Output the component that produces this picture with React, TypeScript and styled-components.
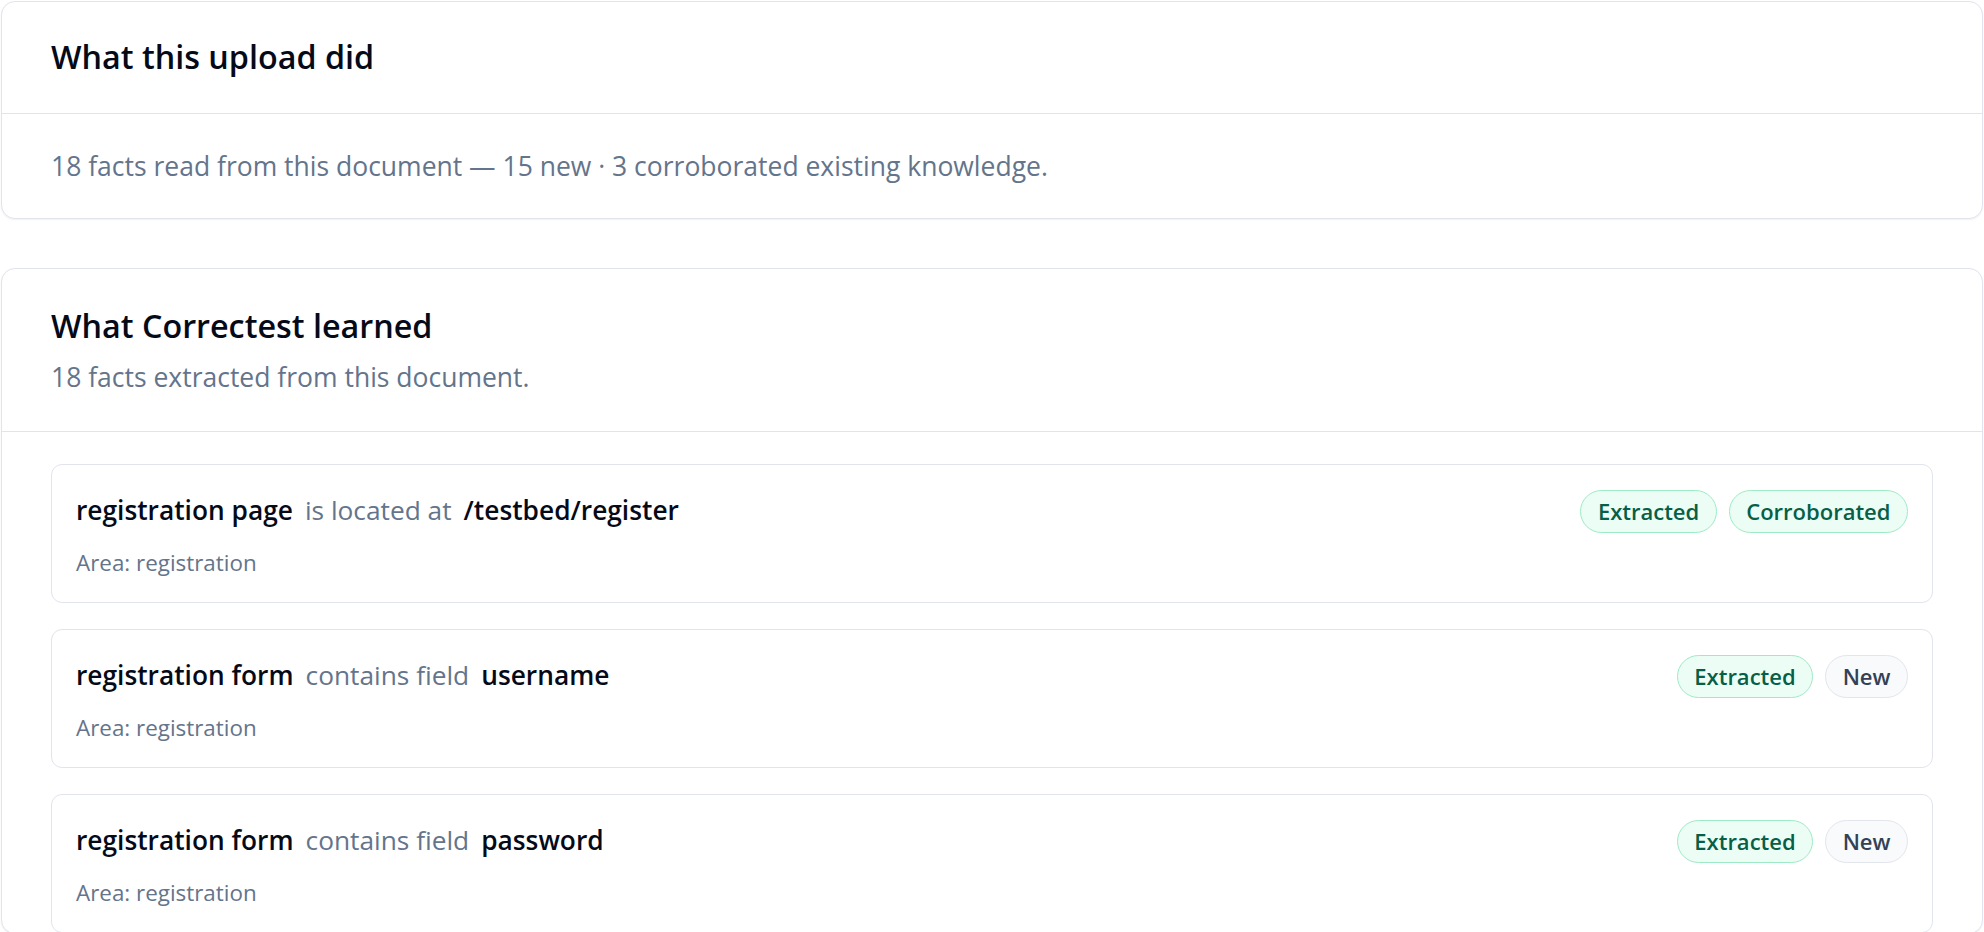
import React from "react";
import styled, { createGlobalStyle } from "styled-components";

const GlobalStyle = createGlobalStyle`
  html, body {
    margin: 0;
    padding: 0;
    background: #ffffff;
  }
  body {
    font-family: "Open Sans", "Noto Sans", "Liberation Sans", sans-serif;
    color: #0f172a;
    -webkit-font-smoothing: antialiased;
  }
  * { box-sizing: border-box; }
`;

const Page = styled.div`
  display: flex;
  flex-direction: column;
  gap: 49px;
  padding: 1px 1px 0 1px;
`;

const Card = styled.section`
  background: #ffffff;
  border: 1px solid #e1e4ed;
  border-radius: 14px;
  box-shadow: 0 1px 2px rgba(15, 23, 42, 0.06);
  overflow: hidden;
`;

const CardHeader = styled.header<{ $pt: number; $pb: number }>`
  padding: ${(p) => p.$pt}px 49px ${(p) => p.$pb}px 49px;
  border-bottom: 1px solid #e1e4ed;
  display: flex;
  flex-direction: column;
  gap: 14px;
`;

const Title = styled.h2`
  margin: 0;
  font-size: 32.3px;
  line-height: 40px;
  font-weight: 600;
  color: #050a18;
`;

const Muted = styled.p`
  margin: 0;
  font-size: 26.5px;
  line-height: 36px;
  font-weight: 400;
  color: #64748b;
`;

const CardBody = styled.div`
  padding: 34px 49px 34px 49px;
`;

const FactList = styled.div`
  padding: 32px 49px 0 49px;
  display: flex;
  flex-direction: column;
  gap: 26px;
`;

const Fact = styled.div`
  border: 1px solid #e1e4ed;
  border-radius: 11px;
  background: #ffffff;
  padding: 25px 24px 24px 24px;
  display: flex;
  flex-direction: column;
  gap: 15px;
`;

const FactRow = styled.div`
  display: flex;
  align-items: center;
  justify-content: space-between;
  height: 43px;
`;

const Statement = styled.div`
  display: flex;
  align-items: baseline;
  gap: 12px;
  font-size: 26.3px;
  line-height: 36px;
  margin-top: -3px;
`;

const Term = styled.span`
  font-weight: 600;
  color: #050a18;
`;

const Predicate = styled.span`
  font-weight: 400;
  color: #64748b;
`;

const Badges = styled.div`
  display: flex;
  align-items: center;
  gap: 12px;
`;

const Badge = styled.span<{ $tone: "green" | "gray" }>`
  display: inline-flex;
  align-items: center;
  height: 43px;
  padding: 0 16.5px;
  border-radius: 999px;
  font-size: 22px;
  line-height: 41px;
  font-weight: 600;
  border: 1.5px solid ${(p) => (p.$tone === "green" ? "#9eeac6" : "#e2e5eb")};
  background: ${(p) => (p.$tone === "green" ? "#ecfdf5" : "#f8fafc")};
  color: ${(p) => (p.$tone === "green" ? "#065f46" : "#334155")};
`;

const Area = styled.div`
  font-size: 22.4px;
  line-height: 30px;
  color: #64748b;
`;

type FactData = {
  subject: string;
  predicate: string;
  object: string;
  area: string;
  badges: { label: string; tone: "green" | "gray" }[];
};

const facts: FactData[] = [
  {
    subject: "registration page",
    predicate: "is located at",
    object: "/testbed/register",
    area: "registration",
    badges: [
      { label: "Extracted", tone: "green" },
      { label: "Corroborated", tone: "green" },
    ],
  },
  {
    subject: "registration form",
    predicate: "contains field",
    object: "username",
    area: "registration",
    badges: [
      { label: "Extracted", tone: "green" },
      { label: "New", tone: "gray" },
    ],
  },
  {
    subject: "registration form",
    predicate: "contains field",
    object: "password",
    area: "registration",
    badges: [
      { label: "Extracted", tone: "green" },
      { label: "New", tone: "gray" },
    ],
  },
];

export default function App() {
  return (
    <>
      <GlobalStyle />
      <Page>
        <Card>
          <CardHeader $pt={34} $pb={37}>
            <Title>What this upload did</Title>
          </CardHeader>
          <CardBody>
            <Muted>
              18 facts read from this document — 15 new · 3 corroborated existing knowledge.
            </Muted>
          </CardBody>
        </Card>

        <Card>
          <CardHeader $pt={36} $pb={36}>
            <Title>What Correctest learned</Title>
            <Muted>18 facts extracted from this document.</Muted>
          </CardHeader>
          <FactList>
            {facts.map((f, i) => (
              <Fact key={i}>
                <FactRow>
                  <Statement>
                    <Term>{f.subject}</Term>
                    <Predicate>{f.predicate}</Predicate>
                    <Term>{f.object}</Term>
                  </Statement>
                  <Badges>
                    {f.badges.map((b) => (
                      <Badge key={b.label} $tone={b.tone}>
                        {b.label}
                      </Badge>
                    ))}
                  </Badges>
                </FactRow>
                <Area>Area: {f.area}</Area>
              </Fact>
            ))}
          </FactList>
        </Card>
      </Page>
    </>
  );
}
